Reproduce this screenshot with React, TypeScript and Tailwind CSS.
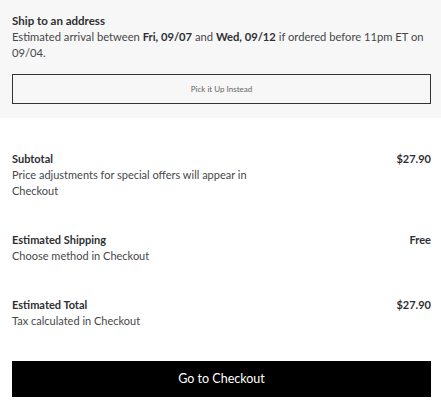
export default function App() {
  const font = { fontFamily: 'Lato, "Open Sans", sans-serif' };
  return (
    <div className="w-[441px] h-[407px] bg-white text-[#46474a]" style={font}>
      <div className="bg-[#f7f7f7] px-3 pt-[13px] pb-[14px]">
        <div className="text-[11.5px] font-bold leading-4 text-[#2e2f32]">Ship to an address</div>
        <div className="text-[11.2px] leading-4 w-[412px]">
          Estimated arrival between <span className="font-bold text-[#2e2f32]">Fri, 09/07</span> and{' '}
          <span className="font-bold text-[#2e2f32]">Wed, 09/12</span> if ordered before 11pm ET on 09/04.
        </div>
        <div className="mt-[13px] h-[30px] mr-[-2px] border border-[#333] flex items-center justify-center text-[8px] text-[#666]">
          Pick it Up Instead
        </div>
      </div>
      <div className="px-3 pr-[10px] pt-[33px]">
        <div className="flex justify-between items-start">
          <div>
            <div className="text-[11px] font-bold leading-4 text-[#2e2f32]">Subtotal</div>
            <div className="text-[11px] leading-[16px] w-[250px]">Price adjustments for special offers will appear in Checkout</div>
          </div>
          <div className="text-[11px] font-bold leading-4 text-[#2e2f32]">$27.90</div>
        </div>
        <div className="flex justify-between items-start mt-[33px]">
          <div>
            <div className="text-[11px] font-bold leading-4 text-[#2e2f32]">Estimated Shipping</div>
            <div className="text-[11px] leading-[16px]">Choose method in Checkout</div>
          </div>
          <div className="text-[11px] font-bold leading-4 text-[#2e2f32]">Free</div>
        </div>
        <div className="flex justify-between items-start mt-[33px]">
          <div>
            <div className="text-[11px] font-bold leading-4 text-[#2e2f32]">Estimated Total</div>
            <div className="text-[11px] leading-[16px]">Tax calculated in Checkout</div>
          </div>
          <div className="text-[11px] font-bold leading-4 text-[#2e2f32]">$27.90</div>
        </div>
        <div className="mt-[32px] h-[36px] bg-black flex items-center justify-center text-white text-[12.5px]">
          Go to Checkout
        </div>
      </div>
    </div>
  );
}
